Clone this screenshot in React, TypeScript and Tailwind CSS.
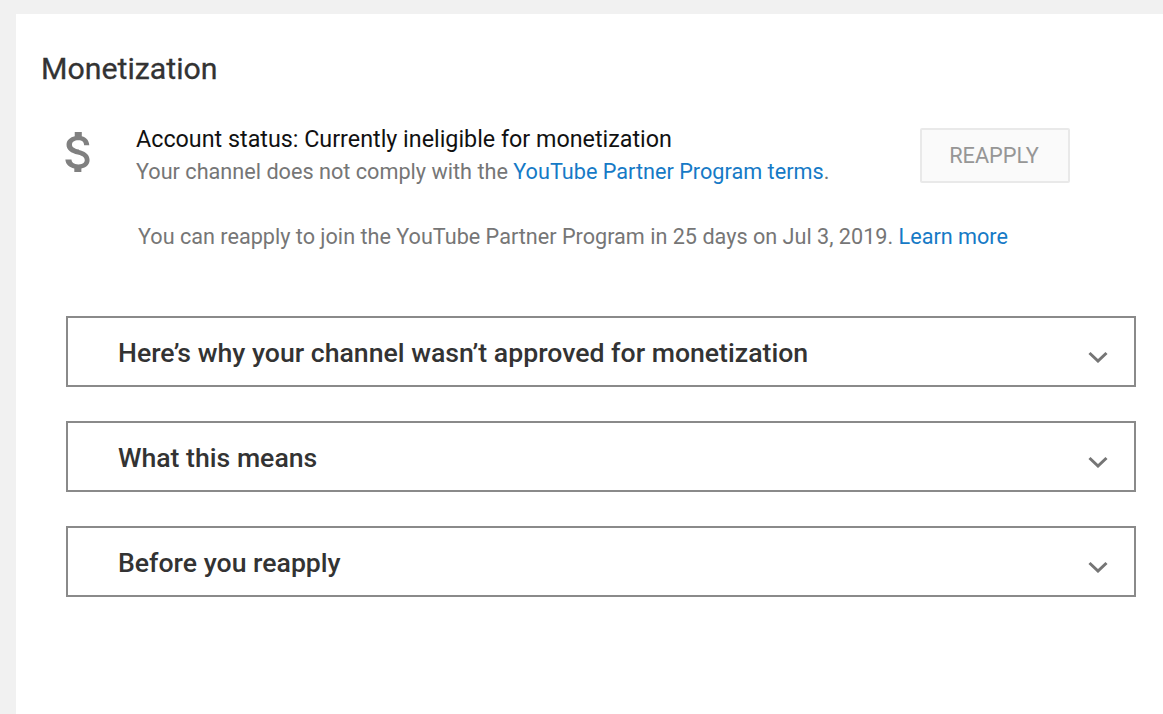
const PANELS = [
  "Here’s why your channel wasn’t approved for monetization",
  "What this means",
  "Before you reapply",
]

function Chevron() {
  return (
    <svg width="20" height="12" viewBox="0 0 20 12" fill="none" className="mt-[10px] shrink-0">
      <path d="M1.500 2l8.500 8 8.500-8" stroke="#757575" strokeWidth="3" />
    </svg>
  )
}

function DollarIcon() {
  return (
    <svg width="26" height="40" viewBox="0 0 24 38" fill="#808080" className="shrink-0">
      <path d="M12.900 16.700c-5-1.300-6.600-2.600-6.600-4.700 0-2.400 2.200-4.100 6-4.100 3.900 0 5.400 1.900 5.500 4.600h4.900c-.2-3.800-2.500-7.300-7.100-8.400V0h-6.700v4c-4.300.9-7.800 3.700-7.800 8.100 0 5.200 4.300 7.800 10.600 9.300 5.600 1.300 6.700 3.300 6.700 5.400 0 1.500-1.100 4-6 4-4.600 0-6.400-2.100-6.600-4.700H0c.3 4.900 3.900 7.600 8.500 8.500v4.100h6.700v-4c4.300-.8 7.800-3.300 7.800-8 0-6.200-5.300-8.400-10.100-9.700z" />
    </svg>
  )
}

export default function App() {
  return (
    <div className="h-[714px] overflow-hidden bg-[#f1f1f1] pl-4 pt-[14px] font-['Roboto',sans-serif]">
      <main className="h-full bg-white pl-[25px] pt-[38px]">
        <h1 className="text-[30.3px] font-normal leading-[34px] text-[#333333] [-webkit-text-stroke:0.3px_#333333]">Monetization</h1>

        <section className="ml-[24px] mt-[38px] flex">
          <div className="w-[71px] pt-[8px]">
            <DollarIcon />
          </div>
          <div className="w-[784px]">
            <p className="text-[23.3px] leading-[30px] text-[#111111]">Account status: Currently ineligible for monetization</p>
            <p className="mt-[3px] text-[21.66px] leading-[30px] text-[#767676]">
              Your channel does not comply with the <a className="text-[#167ac6]">YouTube Partner Program terms</a>.
            </p>
          </div>
          <button className="mt-[4px] h-[55px] w-[150px] rounded-[2px] border-2 border-[#e9e9e9] bg-[#fafafa] pr-[2px] pt-[2px] text-[21.75px] text-[#969696]">
            REAPPLY
          </button>
        </section>

        <p className="ml-[97px] mt-[35px] text-[21.64px] leading-[30px] text-[#767676]">
          You can reapply to join the YouTube Partner Program in 25 days on Jul 3, 2019. <a className="text-[#167ac6]">Learn more</a>
        </p>

        <div className="ml-[25px] mr-[27px] mt-[64px] flex flex-col gap-[34px]">
          {PANELS.map(label => (
            <div key={label} className="flex h-[71px] items-center justify-between border-2 border-[#8a8a8a] pl-[50px] pr-[26px]">
              <span className="pt-1 text-[26.65px] font-medium text-[#333333]">{label}</span>
              <Chevron />
            </div>
          ))}
        </div>
      </main>
    </div>
  )
}
